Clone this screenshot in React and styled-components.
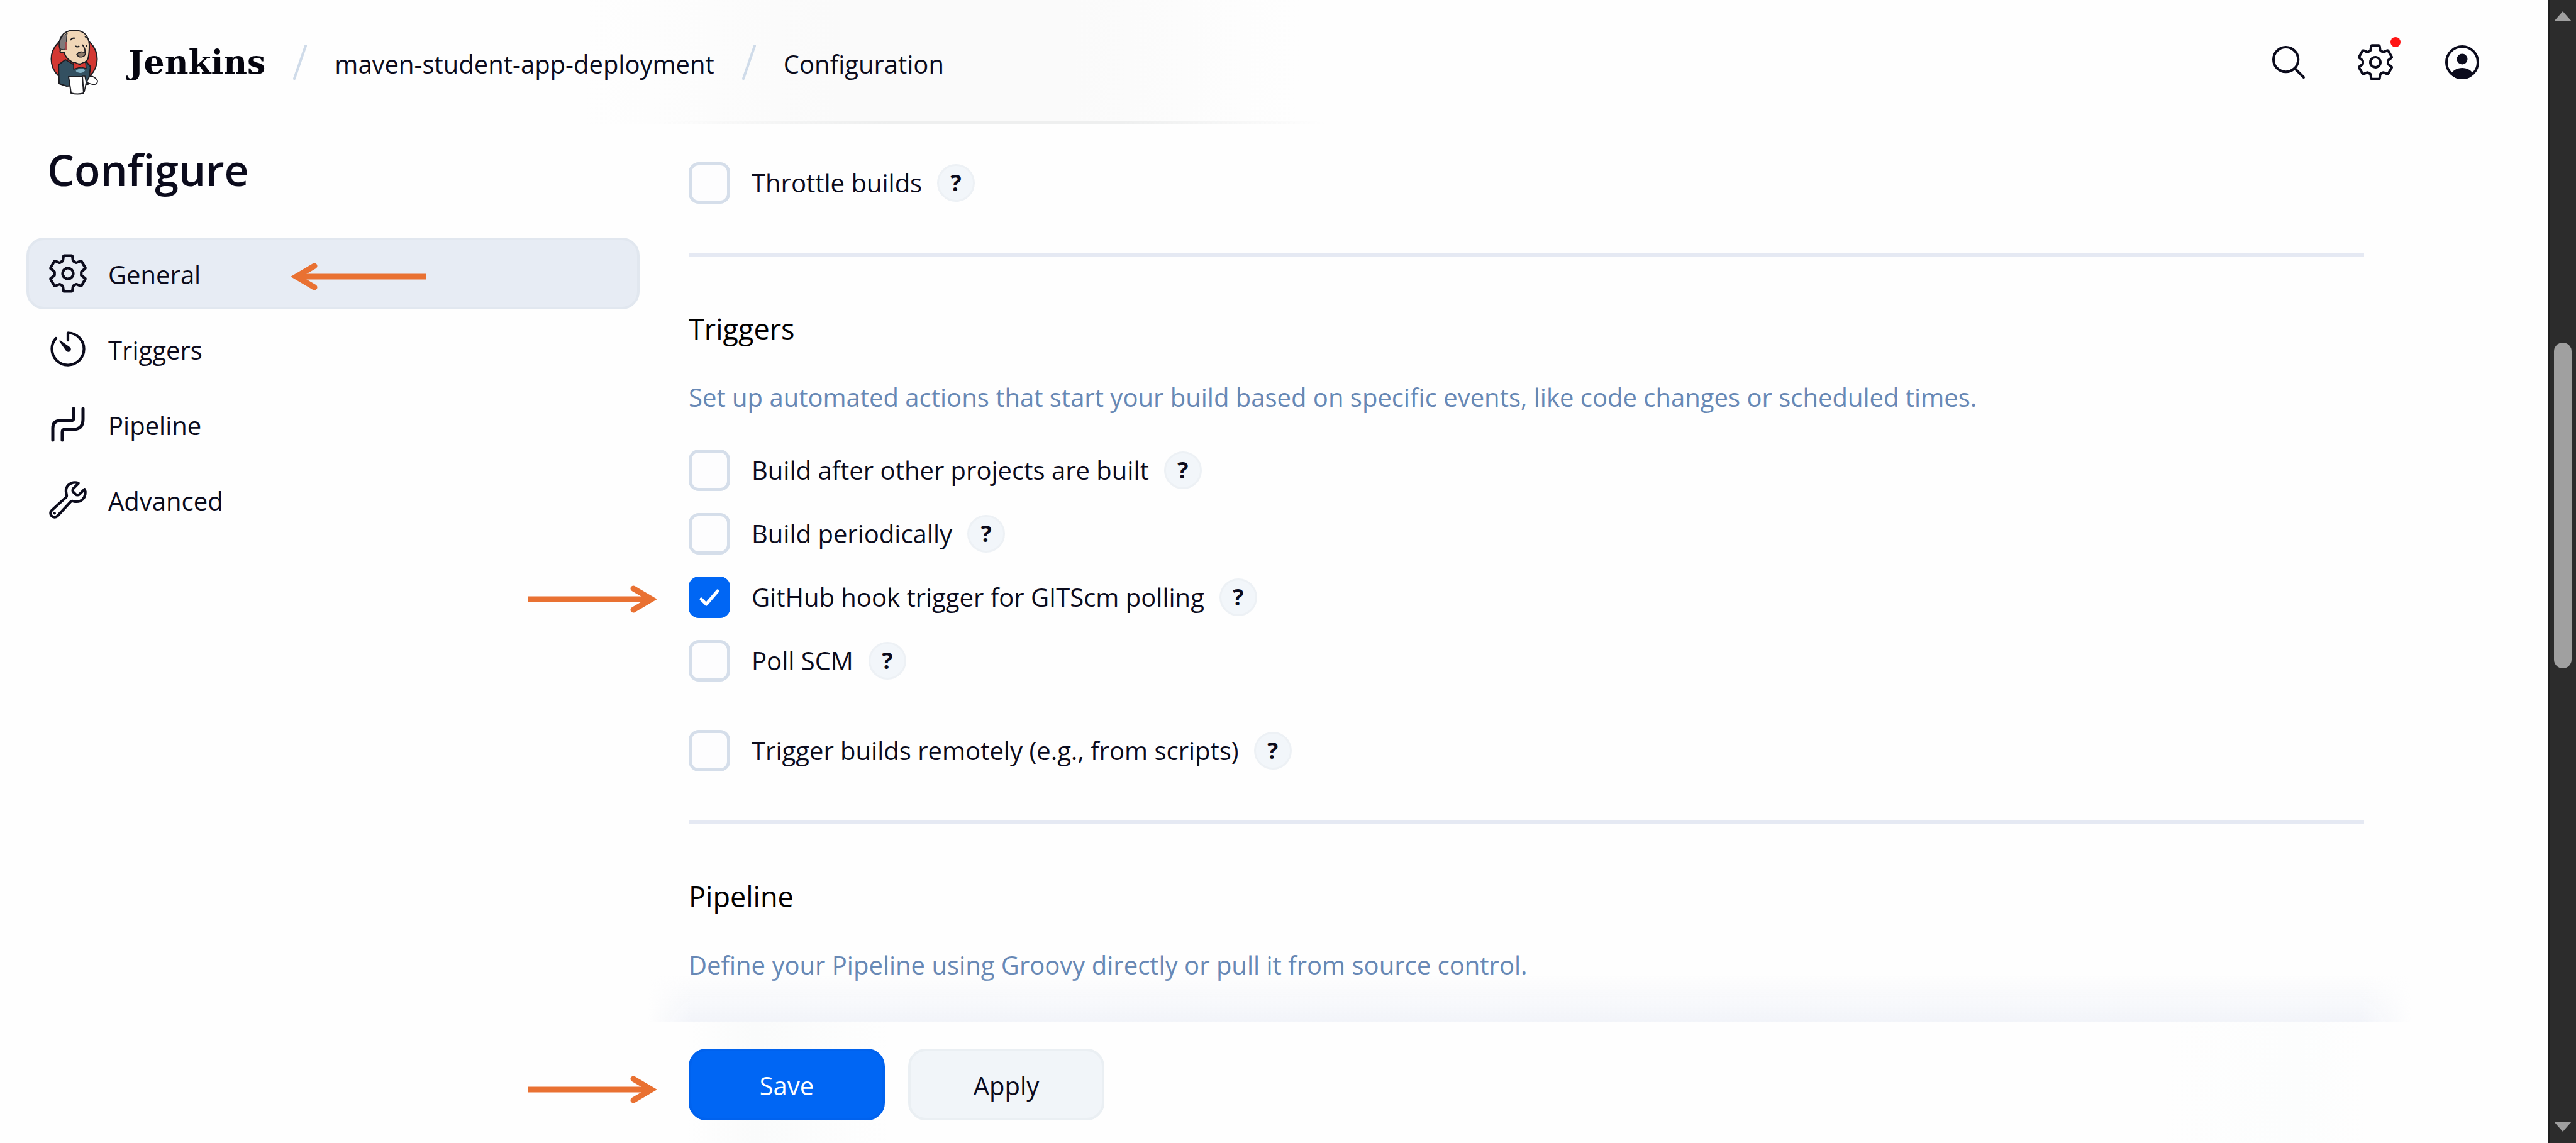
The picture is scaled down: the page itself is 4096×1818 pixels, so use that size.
import React from "react";
import styled, { createGlobalStyle } from "styled-components";
import { IoSearchOutline, IoSettingsOutline, IoTimerOutline, IoBuildOutline } from "react-icons/io5";

const ink = "#0b0b1c";
const secondary = "#6788b5";
const outline = "#d5deea";

const GlobalStyle = createGlobalStyle`
  *, *::before, *::after { box-sizing: border-box; }
  body {
    margin: 0;
    background: #fefefe;
    color: ${ink};
    font-family: "Open Sans", "Noto Sans", sans-serif;
    font-size: 40px;
    line-height: 60px;
  }
  button, input { font: inherit; color: inherit; }
`;

const Shell = styled.div`
  position: relative;
  display: grid;
  grid-template-columns: minmax(0, 1fr) 44px;
  min-height: 100vh;
`;

const Page = styled.div`
  display: flex;
  flex-direction: column;
`;

const Header = styled.header`
  display: flex;
  align-items: center;
  justify-content: space-between;
  height: 198px;
  padding: 0 105px 0 80px;
  background:
    linear-gradient(90deg, transparent 26%, #eeefef 35%, #eeefef 44%, transparent 52%) bottom / 100% 5px no-repeat,
    linear-gradient(90deg, transparent 23%, #fafafa 33%, #fafafa 42%, transparent 51%);
`;

const Trail = styled.nav`
  display: flex;
  align-items: center;
  gap: 44px;
`;

const Brand = styled.a`
  display: flex;
  align-items: center;
  gap: 48px;
  color: #05050f;
  font-family: "DejaVu Serif", serif;
  font-size: 52px;
  font-weight: 700;
  text-decoration: none;
`;

const Crumb = styled.a`
  padding-top: 6px;
  color: inherit;
  text-decoration: none;
`;

const Tools = styled.div`
  display: flex;
  gap: 74px;
`;

const Tool = styled.button`
  position: relative;
  display: flex;
  padding: 0;
  border: 0;
  background: none;
  font-size: 64px;
`;

const Alert = styled.span`
  position: absolute;
  top: -8px;
  right: -8px;
  width: 16px;
  height: 16px;
  border-radius: 50%;
  background: #ff1414;
`;

const Columns = styled.div`
  display: grid;
  grid-template-columns: 975px minmax(0, 1fr);
  column-gap: 78px;
  flex: 1;
  padding: 0 293px 0 42px;
`;

const Side = styled.aside`
  display: flex;
  flex-direction: column;
  gap: 60px;
  padding-top: 24px;
`;

const Title = styled.h1`
  margin: 0;
  padding-left: 33px;
  font-size: 68px;
  font-weight: 600;
  line-height: 96px;
`;

const Menu = styled.nav`
  display: flex;
  flex-direction: column;
  gap: 6px;
`;

const MenuItem = styled.a`
  display: flex;
  align-items: center;
  gap: 30px;
  height: 114px;
  padding: 0 28px;
  border: 4px solid ${(p) => (p.$active ? "#e1e7ef" : "transparent")};
  border-radius: 28px;
  background: ${(p) => (p.$active ? "#e7ecf4" : "transparent")};
  color: inherit;
  text-decoration: none;

  svg { width: 68px; height: 68px; flex: none; }
  span { padding-top: 4px; }
`;

const Main = styled.main`
  display: flex;
  flex-direction: column;
  padding-top: 60px;
`;

const Section = styled.section`
  display: flex;
  flex-direction: column;
`;

const SectionTitle = styled.h2`
  margin: 82px 0 0;
  color: #000;
  font-size: 45px;
  font-weight: 400;
  line-height: 66px;
`;

const Description = styled.p`
  margin: 46px 0 53px;
  color: ${secondary};
`;

const Options = styled.div`
  display: flex;
  flex-direction: column;
  gap: 35px;
`;

const OptionRow = styled.div`
  display: flex;
  align-items: center;
  height: 66px;
  margin-top: ${(p) => (p.$spaced ? 42 : 0)}px;
`;

const OptionLabel = styled.label`
  display: flex;
  align-items: center;
  gap: 34px;
`;

const Box = styled.span`
  display: grid;
  width: 66px;
  height: 66px;

  > * { grid-area: 1 / 1; }
  svg { width: 66px; height: 66px; pointer-events: none; }
`;

const Checkbox = styled.input`
  appearance: none;
  width: 66px;
  height: 66px;
  margin: 0;
  border: 5px solid ${outline};
  border-radius: 16px;
  background: #fdfdfe;

  &:checked { border-color: #0066f4; background: #0066f4; }
  & + svg { visibility: hidden; }
  &:checked + svg { visibility: visible; }
`;

const Help = styled.button`
  width: 60px;
  height: 60px;
  margin-left: 24px;
  padding: 0;
  border: 3px solid #edf1f5;
  border-radius: 50%;
  background: #f2f6fa;
  font-size: 36px;
  font-weight: 700;
  line-height: 52px;
`;

const Rule = styled.hr`
  width: 100%;
  height: 6px;
  margin: 78px 0 0;
  border: 0;
  background: #e5e9f3;
`;

const Actions = styled.div`
  position: sticky;
  bottom: 0;
  display: flex;
  gap: 37px;
  margin-top: auto;
  padding: 42px 0 36px;
  background: linear-gradient(90deg, #fefefe, #fafbfb 4%, #fefefe 12%, #fefefe 88%, #fcfdfd 96%, #fefefe);

  &::before {
    content: "";
    position: absolute;
    inset: auto -75px 100% -65px;
    height: 76px;
    background: linear-gradient(rgba(240, 243, 249, 0), #f2f4f9);
    mask-image: linear-gradient(90deg, transparent, #000 70px, #000 calc(100% - 80px), transparent);
    pointer-events: none;
  }
`;

const ActionButton = styled.button`
  width: 312px;
  height: 114px;
  padding: 4px 0 0;
  border: 4px solid ${(p) => (p.$primary ? "#0062ee" : "#eaeff3")};
  border-radius: 28px;
  background: ${(p) => (p.$primary ? "#0066f4" : "#f1f5f9")};
  color: ${(p) => (p.$primary ? "#fff" : ink)};
`;

const Scrollbar = styled.div`
  display: flex;
  flex-direction: column;
  align-items: center;
  padding: 18px 0;
  border-left: 2px solid #1e1e1e;
  background: #2c2c2c;

  svg { width: 28px; height: 16px; }
`;

const Thumb = styled.div`
  width: 28px;
  height: 518px;
  margin: 511px 0 auto;
  border-radius: 14px;
  background: #a0a0a0;
`;

const Callout = styled.svg`
  position: absolute;
  left: ${(p) => p.$x}px;
  top: ${(p) => p.$y}px;
  width: ${(p) => p.$w}px;
  height: 44px;
  fill: none;
  stroke: #e97132;
  stroke-width: 9;
`;

const Slash = () => (
  <svg width="22" height="56" viewBox="0 0 22 56" aria-hidden="true">
    <path d="M20 2 2 54" stroke="#cfdbe9" strokeWidth="4" strokeLinecap="round" />
  </svg>
);

const Logo = () => (
  <svg width="76" height="104" viewBox="0 0 76 104" stroke="#1d1d22" strokeWidth="2" strokeLinejoin="round" aria-hidden="true">
    <circle cx="38" cy="47" r="36.5" fill="#d33833" />
    <path d="M13 56 24 48l14 8 18-6 8 9-4 28-34 3-12-4z" fill="#335061" />
    <path d="M16 33C10 16 20 1 38 1c16 0 23 10 24 23 0 9 0 15-2 22-3 7-11 10-19 8-8-2-17-8-19-18-4 2-8 1-6-3z" fill="#f0d6b7" />
    <path d="M16 31C12 20 17 10 27 6c-2 7-1 14-2 24l-4 2z" fill="#80797a" strokeWidth="1" />
    <path d="M25 20v12" stroke="#a5484a" strokeWidth="2" />
    <path d="M32 17c2-3 5-4 8-3M55 11l4 3M40 26c2 2 4 2 6 0M51 24c3 4 5 8 4 13M58 24v3" fill="none" />
    <path d="M42 40c3-5 9-6 14-2-1 5-9 9-14 2z" fill="#8d7a69" strokeWidth="1.6" />
    <path d="M37 52c4 0 7 3 10 4 3-3 6-4 9-4l1 10-9-2-11 3z" fill="#d33833" strokeWidth="1.4" />
    <path d="M39 66c5-6 13-5 18-2-3 7-13 8-18 2z" fill="#81b0c4" stroke="#335061" />
    <path d="M50 74h5l2 10-3 15" fill="#fff" strokeWidth="1.6" />
    <path d="M29 75h22l2 26c-6 2-13 2-20 0z" fill="#fff" />
    <path d="M58 84c2-7 5-12 10-9 4 2 7 5 7 8-1 5-6 6-17 1z" fill="#fff" strokeWidth="1.6" />
  </svg>
);

const PersonIcon = () => (
  <svg width="64" height="64" viewBox="0 0 64 64" aria-hidden="true">
    <circle cx="32" cy="32" r="25" fill="none" stroke="currentColor" strokeWidth="4" />
    <circle cx="32" cy="27" r="8.5" fill="currentColor" />
    <path d="M14 51c3-6 10-10 18-10s15 4 18 10c-4 5-10 8-18 8s-14-3-18-8z" fill="currentColor" />
  </svg>
);

const PipelineIcon = () => (
  <svg viewBox="0 0 68 68" fill="none" stroke="currentColor" strokeWidth="5" strokeLinecap="round" aria-hidden="true">
    <path d="M43 9v15q0 4-4 4H22q-12 0-12 12v19M58 9v17q0 16-16 16H29q-4 0-4 4v13" />
  </svg>
);

const LeftArrow = ({ x, y }) => (
  <Callout $x={x} $y={y} $w={216} viewBox="0 0 216 44" aria-hidden="true">
    <path d="M8 22H215" />
    <path d="M37 5 8 22l29 17" strokeLinecap="round" />
  </Callout>
);

const RightArrow = ({ x, y }) => (
  <Callout $x={x} $y={y} $w={206} viewBox="0 0 206 44" aria-hidden="true">
    <path d="M0 22H194" />
    <path d="M167 5l29 17-29 17" strokeLinecap="round" />
  </Callout>
);

const Option = ({ id, label, checked, spaced }) => (
  <OptionRow $spaced={spaced}>
    <OptionLabel htmlFor={id}>
      <Box>
        <Checkbox id={id} type="checkbox" defaultChecked={checked} />
        <svg viewBox="0 0 66 66" fill="none" stroke="#fff" strokeWidth="5" strokeLinecap="round" strokeLinejoin="round" aria-hidden="true">
          <path d="M20 36l8 8 18-21" />
        </svg>
      </Box>
      {label}
    </OptionLabel>
    <Help type="button" aria-label={`Help for ${label}`}>?</Help>
  </OptionRow>
);

const menu = [
  { label: "General", Icon: IoSettingsOutline, active: true },
  { label: "Triggers", Icon: IoTimerOutline },
  { label: "Pipeline", Icon: PipelineIcon },
  { label: "Advanced", Icon: IoBuildOutline },
];

const triggers = [
  { id: "after", label: "Build after other projects are built" },
  { id: "periodic", label: "Build periodically" },
  { id: "github", label: "GitHub hook trigger for GITScm polling", checked: true },
  { id: "poll", label: "Poll SCM" },
  { id: "remote", label: "Trigger builds remotely (e.g., from scripts)", spaced: true },
];

export default function App() {
  return (
    <>
      <GlobalStyle />
      <Shell>
        <Page>
          <Header>
            <Trail aria-label="Breadcrumb">
              <Brand href="#"><Logo />Jenkins</Brand>
              <Slash />
              <Crumb href="#">maven-student-app-deployment</Crumb>
              <Slash />
              <Crumb href="#">Configuration</Crumb>
            </Trail>
            <Tools>
              <Tool type="button" aria-label="Search"><IoSearchOutline /></Tool>
              <Tool type="button" aria-label="Manage"><IoSettingsOutline /><Alert /></Tool>
              <Tool type="button" aria-label="Account"><PersonIcon /></Tool>
            </Tools>
          </Header>
          <Columns>
            <Side>
              <Title>Configure</Title>
              <Menu aria-label="Sections">
                {menu.map(({ label, Icon, active }) => (
                  <MenuItem key={label} href="#" $active={active}><Icon /><span>{label}</span></MenuItem>
                ))}
              </Menu>
            </Side>
            <Main>
              <Option id="throttle" label="Throttle builds" />
              <Rule />
              <Section>
                <SectionTitle>Triggers</SectionTitle>
                <Description>
                  Set up automated actions that start your build based on specific events, like code changes or scheduled times.
                </Description>
                <Options>
                  {triggers.map((t) => <Option key={t.id} {...t} />)}
                </Options>
              </Section>
              <Rule />
              <Section>
                <SectionTitle>Pipeline</SectionTitle>
                <Description>Define your Pipeline using Groovy directly or pull it from source control.</Description>
              </Section>
              <Actions>
                <ActionButton type="button" $primary>Save</ActionButton>
                <ActionButton type="button">Apply</ActionButton>
              </Actions>
            </Main>
          </Columns>
        </Page>
        <Scrollbar aria-hidden="true">
          <svg viewBox="0 0 28 16"><path d="M14 0 28 16H0z" fill="#a0a0a0" /></svg>
          <Thumb />
          <svg viewBox="0 0 28 16"><path d="M0 0h28L14 16z" fill="#a0a0a0" /></svg>
        </Scrollbar>
        <LeftArrow x={463} y={418} />
        <RightArrow x={840} y={931} />
        <RightArrow x={840} y={1711} />
      </Shell>
    </>
  );
}
